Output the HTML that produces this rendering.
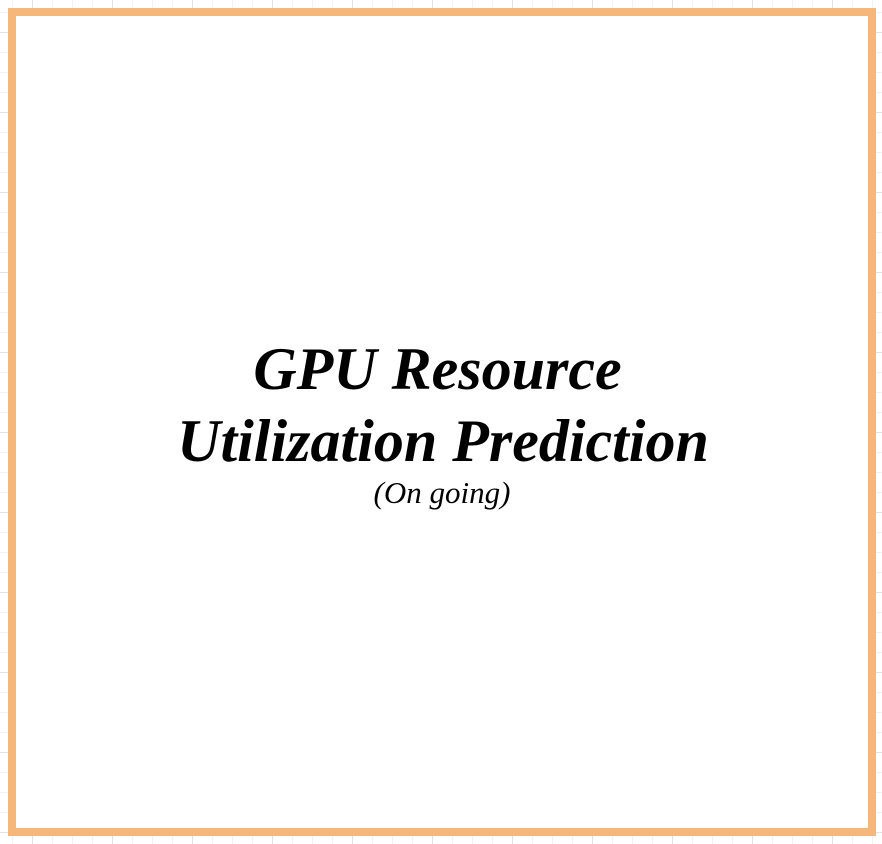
<!DOCTYPE html>
<html><head><style>
html,body{margin:0;padding:0;}
body{width:882px;height:844px;position:relative;overflow:hidden;background-color:#fff;
background-image:
linear-gradient(to right,#e2e2e2 1px,transparent 1px),
linear-gradient(to bottom,#e2e2e2 1px,transparent 1px),
linear-gradient(to right,#f2f2f2 1px,transparent 1px),
linear-gradient(to bottom,#f2f2f2 1px,transparent 1px);
background-size:80px 80px,80px 80px,20px 20px,20px 20px;
background-position:32px 32px,32px 32px,12px 12px,12px 12px;}
.box{position:absolute;left:8px;top:8px;width:852px;height:812px;border:8px solid #f5b77a;background:#fff;}
.t{position:absolute;left:0;width:882px;text-align:center;font-family:"Liberation Serif",serif;font-style:italic;color:#000;white-space:pre;}
.b{font-weight:bold;font-size:60px;line-height:60px;}
</style></head><body>
<div class="box"></div>
<div class="t b" style="top:339px;left:4px">GPU Resource </div>
<div class="t b" style="top:411px;left:2px">Utilization Prediction</div>
<div class="t" style="top:476px;font-size:31px;line-height:34px;left:1px">(On going)</div>
</body></html>
